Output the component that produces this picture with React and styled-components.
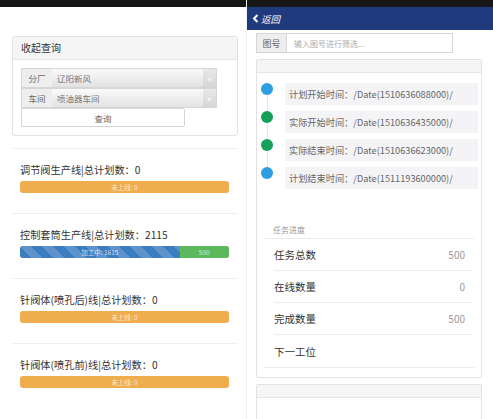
import React from "react"
import styled, { createGlobalStyle } from "styled-components"

const GlobalStyle = createGlobalStyle`
  body {
    margin: 0;
    font-family: "Noto Sans CJK SC", "Noto Sans", sans-serif;
    background: #fff;
  }
`

const Page = styled.div`
  display: flex;
  gap: 1px;
  width: 493px;
  height: 419px;
  overflow: hidden;
  background: #f2f2f2;
`

const Phone = styled.div`
  width: ${p => p.w}px;
  height: 100%;
  background: #fff;
  display: flex;
  flex-direction: column;
  overflow: hidden;
`

const StatusBar = styled.div`
  height: 7px;
  flex-shrink: 0;
  background: #161616;
`

const LeftBody = styled.div`
  padding: 29px 8px 0 12px;
`

const Card = styled.div`
  border: 1px solid #e2e2e2;
  border-radius: 3px;
  background: #fff;
`

const CardHead = styled.div`
  height: 22px;
  line-height: 22px;
  padding-left: 8px;
  font-size: 10px;
  color: #333;
  background: #f5f5f5;
  border-bottom: 1px solid #e6e6e6;
`

const CardBody = styled.div`
  padding: 8px 8px 8px;
  display: flex;
  flex-direction: column;
`

const SelectRow = styled.div`
  display: flex;
  width: 196px;
  height: 20px;
  font-size: 8.5px;
`

const Addon = styled.div`
  width: ${p => p.w || 31}px;
  flex-shrink: 0;
  display: flex;
  align-items: center;
  justify-content: center;
  background: #eee;
  border: 1px solid #d6d6d6;
  border-right: none;
  color: #666;
  box-sizing: border-box;
  font-size: ${p => p.fs || 8.5}px;
`

const Select = styled.div`
  flex: 1;
  display: flex;
  align-items: center;
  justify-content: space-between;
  padding-left: 5px;
  color: #777;
  border: 1px solid #d6d6d6;
  border-left: none;
  background: linear-gradient(#fafafa, #e2e2e2);
  box-sizing: border-box;
`

const Arrow = styled.div`
  width: 13px;
  height: 100%;
  background: linear-gradient(#e8e8e8, #d6d6d6);
  display: flex;
  align-items: center;
  justify-content: center;
  color: #f2f2f2;
  font-size: 5px;
`

const QueryButton = styled.div`
  width: 164px;
  height: 19px;
  box-sizing: border-box;
  border: 1px solid #d6d6d6;
  border-radius: 2px;
  background: #fff;
  display: flex;
  align-items: center;
  justify-content: center;
  font-size: 8.5px;
  color: #666;
`

const Line = styled.div`
  margin-top: ${p => p.first ? 12 : 0}px;
  border-top: 1px solid #efefef;
  padding: 13px 9px 20px 8px;
`

const LineTitle = styled.div`
  font-size: 10.2px;
  line-height: 16px;
  color: #333;
`

const Bar = styled.div`
  margin-top: 3px;
  height: 12px;
  border-radius: 3px;
  overflow: hidden;
  display: flex;
  background: #f0ad4e;
`

const BarPart = styled.div`
  display: flex;
  align-items: center;
  justify-content: center;
  font-size: 6.5px;
  color: rgba(255, 255, 255, 0.75);
  background-color: ${p => p.color};
  ${p => p.striped && `
    background-image: linear-gradient(45deg, rgba(255,255,255,.18) 25%, transparent 25%, transparent 50%, rgba(255,255,255,.18) 50%, rgba(255,255,255,.18) 75%, transparent 75%, transparent);
    background-size: 22px 22px;
  `}
`

const NavBar = styled.div`
  height: 23px;
  flex-shrink: 0;
  background: #1f3a7d;
  display: flex;
  align-items: center;
  padding-left: 5px;
  gap: 2px;
  color: #fff;
  font-size: 9.5px;
  font-style: italic;
`

const RightBody = styled.div`
  padding: 3px 11px 0 9px;
  display: flex;
  flex-direction: column;
`

const SearchGroup = styled.div`
  display: flex;
  width: 197px;
  height: 20px;
`

const SearchInput = styled.div`
  flex: 1;
  border: 1px solid #d6d6d6;
  display: flex;
  align-items: center;
  padding-left: 7px;
  font-size: 8px;
  color: #aaa;
  box-sizing: border-box;
`

const TaskCard = styled(Card)`
  margin-top: 6px;
  border-radius: 2px;
  padding-bottom: ${p => p.open ? 0 : 9}px;
  ${p => p.open && `
    border-bottom: none;
    height: 60px;
  `}
`

const TaskHead = styled.div`
  height: 12px;
  background: #f5f5f5;
  border-bottom: 1px solid #e6e6e6;
`

const Timeline = styled.div`
  padding-top: 10px;
  display: flex;
  flex-direction: column;
  gap: 6px;
`

const Event = styled.div`
  position: relative;
  display: flex;
  align-items: flex-start;

  &:not(:last-child)::before {
    content: "";
    position: absolute;
    left: 10px;
    top: 12px;
    height: 22px;
    border-left: 1px solid #e4e4e4;
  }
`

const Dot = styled.div`
  width: 12px;
  height: 12px;
  border-radius: 50%;
  margin: 0 12px 0 4px;
  flex-shrink: 0;
  background: ${p => p.color};
`

const EventText = styled.div`
  flex: 1;
  height: 22px;
  margin-right: 3px;
  line-height: 22px;
  padding-left: 4px;
  background: #f4f4f6;
  font-size: 9.2px;
  color: #666;
  white-space: nowrap;
`

const Caption = styled.div`
  margin-top: 33px;
  padding-left: 16px;
  line-height: 16px;
  font-size: 8px;
  color: #999;
`

const StatList = styled.div`
  margin: 0 6px 0 7px;
  border-top: 1px solid #ececec;
  border-bottom: 1px solid #ececec;
`

const StatRow = styled.div`
  height: 32px;
  margin: 0 3px 0 10px;
  display: flex;
  align-items: center;
  justify-content: space-between;
  padding-right: 7px;
  box-sizing: border-box;
  &:not(:last-child) {
    border-bottom: 1px solid #ececec;
  }
`

const StatName = styled.span`
  font-size: 10.5px;
  color: #333;
`

const StatValue = styled.span`
  font-size: 10px;
  color: #999;
`

const lines = [
  { title: "调节阀生产线|总计划数：0", parts: [{ text: "未上线: 0", color: "#f0ad4e", w: 100 }] },
  {
    title: "控制套筒生产线|总计划数：2115",
    parts: [
      { text: "加工中: 1615", color: "#3a7dc0", w: (1615 / 2115) * 100, striped: true },
      { text: "500", color: "#5cb85c", w: (500 / 2115) * 100 },
    ],
  },
  { title: "针阀体(喷孔后)线|总计划数：0", parts: [{ text: "未上线: 0", color: "#f0ad4e", w: 100 }] },
  { title: "针阀体(喷孔前)线|总计划数：0", parts: [{ text: "未上线: 0", color: "#f0ad4e", w: 100 }] },
]

const events = [
  { label: "计划开始时间：/Date(1510636088000)/", color: "#2d9fe0" },
  { label: "实际开始时间：/Date(1510636435000)/", color: "#16a05a" },
  { label: "实际结束时间：/Date(1510636623000)/", color: "#16a05a" },
  { label: "计划结束时间：/Date(1511193600000)/", color: "#2d9fe0" },
]

const stats = [
  ["任务总数", "500"],
  ["在线数量", "0"],
  ["完成数量", "500"],
  ["下一工位", ""],
]

export default function App() {
  return (
    <Page>
      <GlobalStyle />
      <Phone w={246}>
        <StatusBar />
        <LeftBody>
          <Card>
            <CardHead>收起查询</CardHead>
            <CardBody>
              <SelectRow>
                <Addon>分厂</Addon>
                <Select>
                  辽阳新风
                  <Arrow>▼</Arrow>
                </Select>
              </SelectRow>
              <SelectRow>
                <Addon>车间</Addon>
                <Select>
                  喷油器车间
                  <Arrow>▼</Arrow>
                </Select>
              </SelectRow>
              <QueryButton>查询</QueryButton>
            </CardBody>
          </Card>
          {lines.map((l, i) => (
            <Line key={l.title} first={i === 0}>
              <LineTitle>{l.title}</LineTitle>
              <Bar>
                {l.parts.map(p => (
                  <BarPart key={p.text} color={p.color} striped={p.striped} style={{ width: `${p.w}%` }}>
                    {p.text}
                  </BarPart>
                ))}
              </Bar>
            </Line>
          ))}
        </LeftBody>
      </Phone>
      <Phone w={246}>
        <StatusBar />
        <NavBar>
          <svg width="7" height="9" viewBox="0 0 7 9">
            <path d="M5.5 1 L2 4.5 L5.5 8" stroke="#fff" strokeWidth="2" fill="none" />
          </svg>
          返回
        </NavBar>
        <RightBody>
          <SearchGroup>
            <Addon w={30} fs={9}>图号</Addon>
            <SearchInput>输入图号进行筛选...</SearchInput>
          </SearchGroup>
          <TaskCard>
            <TaskHead />
            <Timeline>
              {events.map(e => (
                <Event key={e.label}>
                  <Dot color={e.color} />
                  <EventText>{e.label}</EventText>
                </Event>
              ))}
            </Timeline>
            <Caption>任务进度</Caption>
            <StatList>
              {stats.map(([name, value]) => (
                <StatRow key={name}>
                  <StatName>{name}</StatName>
                  <StatValue>{value}</StatValue>
                </StatRow>
              ))}
            </StatList>
          </TaskCard>
          <TaskCard open>
            <TaskHead />
          </TaskCard>
        </RightBody>
      </Phone>
    </Page>
  )
}
